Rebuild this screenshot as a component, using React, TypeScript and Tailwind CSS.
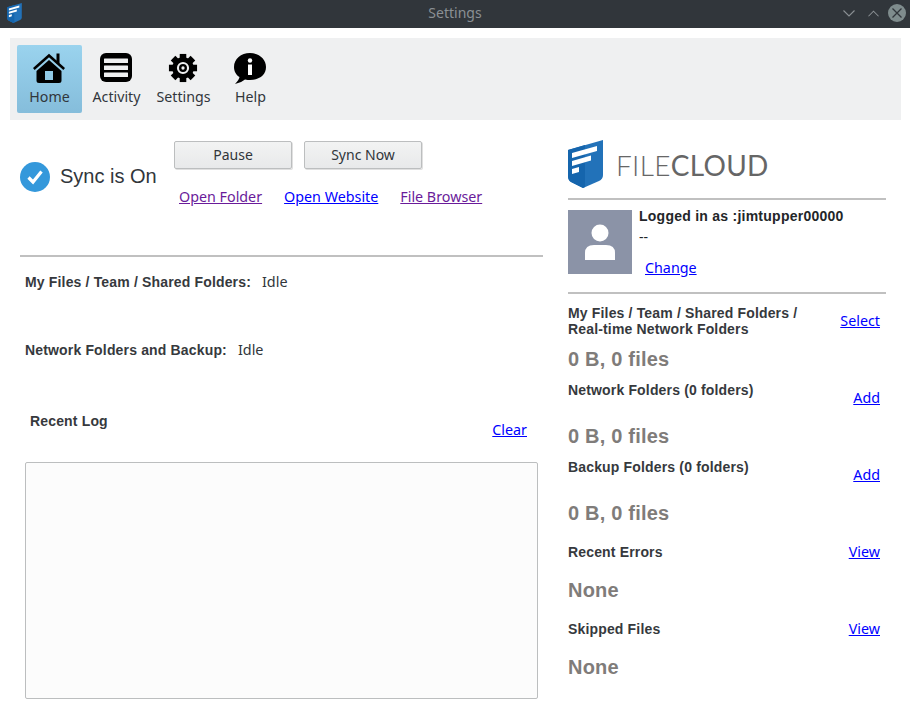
import type { ReactNode } from "react";

const ui = "font-['Noto_Sans',sans-serif]";
const label = "font-['Liberation_Sans',sans-serif] font-bold text-[14px] tracking-[0.16px] leading-[16px] text-[#36393d]";
const big = "font-['Liberation_Sans',sans-serif] font-bold text-[20px] tracking-[0.2px] leading-[23px] text-[#7f7c7a]";

function FileCloudMark({ className }: { className?: string }) {
  return (
    <svg viewBox="0 0 35 48" className={className}>
      <path d="M0 10 L35 0 V35 Q35 39 31 41 L15 48 L3 42 Q0 40 0 36 Z" fill="#2272b9" />
      <path d="M0 10 L17 5 V47 L15 48 L3 42 Q0 40 0 36 Z" fill="#1565ad" />
      <path d="M4 13 L29 6 V11 L4 18 Z" fill="#fff" />
      <path d="M4 21 L23 15.5 V20.5 L4 26 Z" fill="#fff" />
      <path d="M4 29 L11 27 V32 L4 34 Z" fill="#fff" />
    </svg>
  );
}

function HomeIcon() {
  return (
    <svg viewBox="0 0 32 32" className="h-[32px] w-[32px]">
      <rect x="23.5" y="1.5" width="3" height="10" fill="#000" />
      <path d="M0.8 17 L16 3.5 L31.2 17" fill="none" stroke="#000" strokeWidth="2.6" />
      <path d="M3.5 19 L16 8 L28.5 19 V28.5 Q28.5 31 26 31 H6 Q3.5 31 3.5 28.5 Z M12 19 V28 H20 V19 Z" fill="#000" fillRule="evenodd" />
    </svg>
  );
}

function ActivityIcon() {
  return (
    <svg viewBox="0 0 32 30" className="h-[30px] w-[32px]">
      <rect width="32" height="29" rx="6" fill="#000" />
      <rect x="4" y="5.5" width="24" height="4.5" fill="#eff0f1" rx="0.5" />
      <rect x="4" y="12.5" width="24" height="4.5" fill="#eff0f1" rx="0.5" />
      <rect x="4" y="19.5" width="24" height="4.5" fill="#eff0f1" rx="0.5" />
    </svg>
  );
}

function GearIcon() {
  return (
    <svg viewBox="0 0 32 32" className="h-[30px] w-[30px]">
      <g fill="#000">
        {[0, 45, 90, 135, 180, 225, 270, 315].map((a) => (
          <rect key={a} x="12.5" y="1" width="7" height="7" transform={`rotate(${a} 16 16)`} />
        ))}
      </g>
      <circle cx="16" cy="16" r="9" fill="none" stroke="#000" strokeWidth="5" />
      <circle cx="16" cy="16" r="3" fill="none" stroke="#000" strokeWidth="2.5" />
    </svg>
  );
}

function HelpIcon() {
  return (
    <svg viewBox="0 0 32 31" className="h-[31px] w-[32px]">
      <path d="M16 0 C25 0 32 6 32 14 C32 22 25 27 16 27 Q14 27 11 26.5 Q7 30 1 31 Q5 27 5.5 24 C2 22 0 18 0 14 C0 6 7 0 16 0 Z" fill="#000" />
      <circle cx="16" cy="7.5" r="2.2" fill="#fff" />
      <rect x="14" y="11.5" width="4" height="10.5" fill="#fff" />
    </svg>
  );
}

function ToolItem({ icon, text, active }: { icon: ReactNode; text: string; active?: boolean }) {
  return (
    <div
      className={`flex h-[68px] w-[65px] flex-col items-center rounded-[2px] pt-[7px] ${
        active ? "bg-gradient-to-b from-[#9ad3ee] to-[#85bddb]" : ""
      }`}
    >
      <div className="mr-[2px] flex h-[32px] items-center">{icon}</div>
      <span className="mt-[3px] whitespace-nowrap text-[14.2px] leading-[19px] text-[#31363b]">{text}</span>
    </div>
  );
}

function Btn({ children }: { children: ReactNode }) {
  return (
    <button
      type="button"
      className="h-[28px] w-[118px] rounded-[2px] border border-[#bcbebf] bg-gradient-to-b from-[#f2f3f3] to-[#e8e9ea] pb-[2px] text-[14px] leading-[19px] text-[#31363b] shadow-[1px_1px_0_#e0e0e0]"
    >
      {children}
    </button>
  );
}

function A({ children, purple }: { children: ReactNode; purple?: boolean }) {
  return (
    <a className={`whitespace-nowrap text-[14.3px] leading-[19px] underline ${purple ? "text-[#6a1b9a]" : "text-[#0000ff]"}`}>
      {children}
    </a>
  );
}

function Section({
  title,
  link,
  value,
  head,
  linkClass,
}: {
  title: ReactNode;
  link: string;
  value: string;
  head: string;
  linkClass: string;
}) {
  return (
    <div className="flex flex-col">
      <div className={`flex items-start justify-between pr-[6px] ${head}`}>
        <div className={label}>{title}</div>
        <div className={`flex ${linkClass}`}>
          <A>{link}</A>
        </div>
      </div>
      <div className={big}>{value}</div>
    </div>
  );
}

export default function App() {
  return (
    <div className={`h-[724px] w-[910px] overflow-hidden bg-white ${ui}`}>
      <div className="relative flex h-[28px] items-center justify-center bg-[#31363b] pb-[3px] text-[14px] text-[#8b9094]">
        <FileCloudMark className="absolute left-[7px] top-[3px] h-[20px] w-[15px]" />
        Settings
        <div className="absolute right-[4px] top-[4px] flex items-center">
          <svg viewBox="0 0 12 7" className="mr-[13px] h-[7px] w-[12px]">
            <path d="M0.5 0.5 L6 6 L11.5 0.5" fill="none" stroke="#8b9094" strokeWidth="1.1" />
          </svg>
          <svg viewBox="0 0 12 7" className="mr-[9px] h-[7px] w-[11px]">
            <path d="M0.5 6.5 L6 1 L11.5 6.5" fill="none" stroke="#8b9094" strokeWidth="1.1" />
          </svg>
          <div className="flex h-[18px] w-[18px] items-center justify-center rounded-full bg-[#7f8c8d]">
            <svg viewBox="0 0 10 10" className="h-[10px] w-[10px]">
              <path d="M0.5 0.5 L9.5 9.5 M9.5 0.5 L0.5 9.5" stroke="#31363b" strokeWidth="1.3" />
            </svg>
          </div>
        </div>
      </div>

      <div className="mx-[10px] mt-[10px] flex h-[82px] w-[891px] items-center gap-[2px] bg-[#eff0f1] pl-[7px]">
        <ToolItem icon={<HomeIcon />} text="Home" active />
        <ToolItem icon={<ActivityIcon />} text="Activity" />
        <ToolItem icon={<GearIcon />} text="Settings" />
        <ToolItem icon={<HelpIcon />} text="Help" />
      </div>

      <div className="flex pl-[20px]">
        <div className="flex w-[523px] flex-col">
          <div className="flex h-[137px] border-b-2 border-[#c0c0c0]">
            <div className="flex w-[154px] items-start pt-[42px]">
              <svg viewBox="0 0 30 30" className="h-[30px] w-[30px] shrink-0">
                <circle cx="15" cy="15" r="15" fill="#3498db" />
                <path d="M8.5 15.5 L13 20 L21.5 9.5" fill="none" stroke="#fff" strokeWidth="3.2" />
              </svg>
              <span className="ml-[10px] mt-[3px] whitespace-nowrap font-['Liberation_Sans',sans-serif] text-[20px] leading-[23px] text-[#31363b]">
                Sync is On
              </span>
            </div>
            <div className="flex flex-col pt-[21px]">
              <div className="flex gap-[12px]">
                <Btn>Pause</Btn>
                <Btn>Sync Now</Btn>
              </div>
              <div className="mt-[18px] flex gap-[22px] pl-[5px]">
                <A purple>Open Folder</A>
                <A>Open Website</A>
                <A purple>File Browser</A>
              </div>
            </div>
          </div>

          <div className="flex h-[68px] items-start gap-[11px] pl-[5px] pt-[15px]">
            <span className={`${label} pt-[2px]`}>My Files / Team / Shared Folders:</span>
            <span className="text-[14.4px] leading-[19px] text-[#31363b]">Idle</span>
          </div>
          <div className="flex h-[68px] items-start gap-[11px] pl-[5px] pt-[15px]">
            <span className={`${label} pt-[2px]`}>Network Folders and Backup:</span>
            <span className="text-[14.4px] leading-[19px] text-[#31363b]">Idle</span>
          </div>

          <div className="flex h-[69px] items-start justify-between pl-[10px] pr-[16px] pt-[20px]">
            <span className={label}>Recent Log</span>
            <span className="flex pt-[7px]">
              <A>Clear</A>
            </span>
          </div>

          <div className="ml-[5px] h-[237px] w-[513px] rounded-[2px] border border-[#bcbebf] bg-[#fcfcfc]" />
        </div>

        <div className="ml-[25px] flex w-[318px] flex-col">
          <div className="flex h-[80px] items-start border-b-2 border-[#c0c0c0] pt-[20px]">
            <FileCloudMark className="h-[48px] w-[35px]" />
            <span className="ml-[13px] mt-[10px] whitespace-nowrap font-['Lato',sans-serif] text-[28px] font-light leading-[30px] tracking-[0.3px] text-[#666]">
              FILE<span className="font-normal">CLOUD</span>
            </span>
          </div>

          <div className="flex h-[94px] border-b-2 border-[#c0c0c0] pt-[10px]">
            <div className="flex h-[64px] w-[64px] items-center justify-center bg-[#8b93a7]">
              <svg viewBox="0 0 32 36" className="h-[36px] w-[32px]">
                <circle cx="16" cy="9" r="8.5" fill="#fff" />
                <path d="M1 36 V29 Q1 21 10 21 H22 Q31 21 31 29 V36 Z" fill="#fff" />
              </svg>
            </div>
            <div className="ml-[7px] flex flex-col">
              <span className="-mt-[2px] font-['Liberation_Sans',sans-serif] text-[14px] font-bold leading-[16px] tracking-[0.25px] text-[#232629]">
                Logged in as :jimtupper00000
              </span>
              <span className="mt-[3px] text-[14px] leading-[19px] text-[#232629]">--</span>
              <span className="ml-[6px] mt-[12px] flex">
                <A>Change</A>
              </span>
            </div>
          </div>

          <div className="mt-[11px] flex flex-col">
            <Section
              title={
                <>
                  My Files / Team / Shared Folders /
                  <br />
                  Real-time Network Folders
                </>
              }
              link="Select"
              value="0 B, 0 files"
              head="h-[43px]"
              linkClass="pt-[6px]"
            />
            <div className="mt-[11px]">
              <Section title="Network Folders (0 folders)" link="Add" value="0 B, 0 files" head="h-[43px]" linkClass="pt-[6px]" />
            </div>
            <div className="mt-[11px]">
              <Section title="Backup Folders (0 folders)" link="Add" value="0 B, 0 files" head="h-[43px]" linkClass="pt-[6px]" />
            </div>
            <div className="mt-[19px]">
              <Section title="Recent Errors" link="View" value="None" head="h-[35px]" linkClass="-mt-[2px]" />
            </div>
            <div className="mt-[19px]">
              <Section title="Skipped Files" link="View" value="None" head="h-[35px]" linkClass="-mt-[2px]" />
            </div>
          </div>
        </div>
      </div>
    </div>
  );
}
